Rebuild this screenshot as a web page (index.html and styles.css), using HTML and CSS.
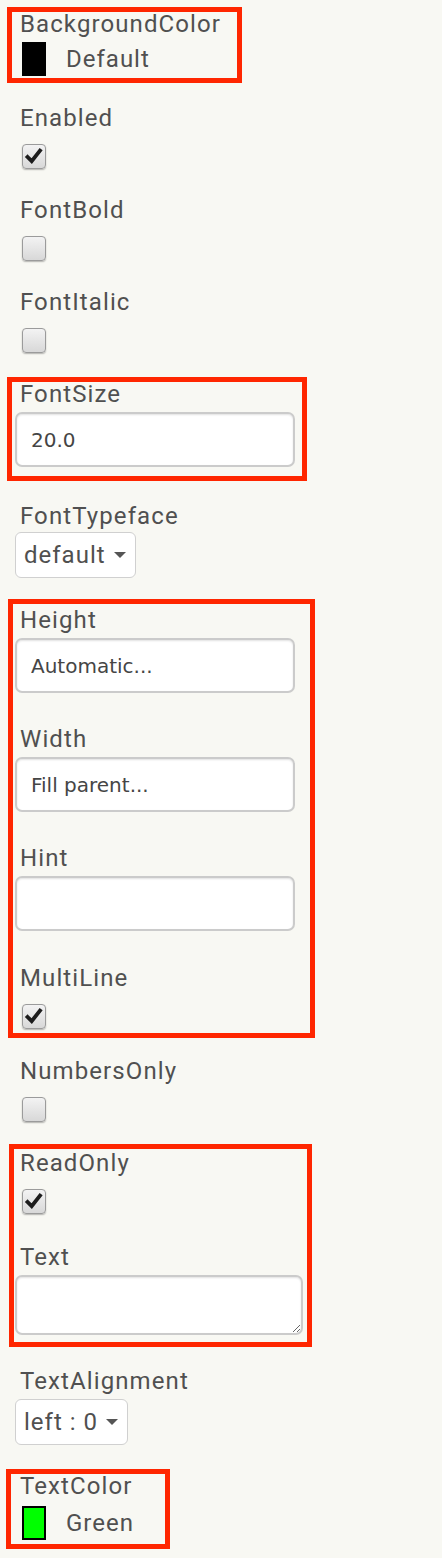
FILE: index.html
```html
<!DOCTYPE html>
<html lang="en">
<head>
<meta charset="utf-8">
<title>Properties</title>
<link rel="stylesheet" href="styles.css">
</head>
<body>
<div class="panel">

  <div class="frame frame-bg">
    <div class="label">BackgroundColor</div>
    <div class="color-row"><span class="swatch swatch-black"></span><span class="color-name">Default</span></div>
  </div>

  <div class="prop gap-23">
    <div class="label">Enabled</div>
    <span class="check"><svg viewBox="0 0 24 24" width="22" height="22"><path d="M5 12 L9.5 16.5 L18.5 5" fill="none" stroke="#1c1c1c" stroke-width="4.2" stroke-linecap="square" stroke-linejoin="miter"/></svg></span>
  </div>

  <div class="prop gap-29">
    <div class="label">FontBold</div>
    <span class="check"></span>
  </div>

  <div class="prop gap-29">
    <div class="label">FontItalic</div>
    <span class="check"></span>
  </div>

  <div class="frame frame-size gap-24">
    <div class="label">FontSize</div>
    <input class="text-input" type="text" value="20.0">
  </div>

  <div class="prop gap-23">
    <div class="label">FontTypeface</div>
    <div class="select select-typeface"><span>default</span><span class="caret"></span></div>
  </div>

  <div class="frame frame-dims gap-21">
    <div class="label">Height</div>
    <input class="text-input" type="text" value="Automatic...">
    <div class="label gap-34">Width</div>
    <input class="text-input" type="text" value="Fill parent...">
    <div class="label gap-34">Hint</div>
    <input class="text-input" type="text" value="">
    <div class="label gap-35">MultiLine</div>
    <span class="check"><svg viewBox="0 0 24 24" width="22" height="22"><path d="M5 12 L9.5 16.5 L18.5 5" fill="none" stroke="#1c1c1c" stroke-width="4.2" stroke-linecap="square" stroke-linejoin="miter"/></svg></span>
  </div>

  <div class="prop gap-21">
    <div class="label">NumbersOnly</div>
    <span class="check"></span>
  </div>

  <div class="frame frame-read gap-22">
    <div class="label">ReadOnly</div>
    <span class="check"><svg viewBox="0 0 24 24" width="22" height="22"><path d="M5 12 L9.5 16.5 L18.5 5" fill="none" stroke="#1c1c1c" stroke-width="4.2" stroke-linecap="square" stroke-linejoin="miter"/></svg></span>
    <div class="label gap-31">Text</div>
    <textarea class="text-area"></textarea>
  </div>

  <div class="prop gap-22">
    <div class="label">TextAlignment</div>
    <div class="select select-align"><span>left : 0</span><span class="caret"></span></div>
  </div>

  <div class="frame frame-color gap-24">
    <div class="label">TextColor</div>
    <div class="color-row color-row-green"><span class="swatch swatch-green"></span><span class="color-name">Green</span></div>
  </div>

</div>
</body>
</html>
```

FILE: styles.css
```css
* {
  box-sizing: border-box;
}

html, body {
  margin: 0;
  background: #f8f8f3;
}

body {
  font-family: Roboto, "Liberation Sans", sans-serif;
  color: #505050;
}

.panel {
  --x: 0px;
  padding-top: 7px;
  padding-bottom: 11px;
}

.frame {
  border: 5px solid #ff2600;
}

.frame-bg {
  --x: 12px;
  margin-left: 7px;
  width: 235px;
  padding-bottom: 2px;
}

.frame-size {
  --x: 12px;
  margin-left: 7px;
  width: 300px;
  padding-bottom: 9px;
}

.frame-dims {
  --x: 13px;
  margin-left: 8px;
  width: 307px;
  padding-top: 4px;
  padding-bottom: 4px;
}

.frame-read {
  --x: 14px;
  margin-left: 9px;
  width: 303px;
  padding-top: 2px;
  padding-bottom: 7px;
}

.frame-color {
  --x: 11px;
  margin-left: 6px;
  width: 164px;
  padding-bottom: 4px;
}

.gap-21 { margin-top: 21px; }
.gap-22 { margin-top: 22px; }
.gap-23 { margin-top: 23px; }
.gap-24 { margin-top: 24px; }
.gap-29 { margin-top: 29px; }
.gap-31 { margin-top: 31px; }
.gap-34 { margin-top: 34px; }
.gap-35 { margin-top: 35px; }

.label {
  font-size: 24px;
  line-height: 24px;
  letter-spacing: 1.1px;
  padding-left: calc(20px - var(--x));
  white-space: nowrap;
}

.color-row {
  display: flex;
  align-items: center;
  height: 34px;
  margin-top: 6px;
  margin-left: calc(22px - var(--x));
}

.color-row-green {
  margin-top: 8px;
}

.swatch {
  display: block;
  width: 24px;
  height: 34px;
  border: 2px solid #000;
}

.swatch-black { background: #000; }
.swatch-green { background: #00ff00; }

.color-name {
  margin-left: 20px;
  font-size: 24px;
  line-height: 34px;
  letter-spacing: 1px;
}

.check {
  display: flex;
  align-items: center;
  justify-content: center;
  width: 24px;
  height: 25px;
  margin-top: 14px;
  margin-left: calc(22px - var(--x));
  border: 1.5px solid #9b9b9b;
  border-radius: 4px;
  background: linear-gradient(#f3f3f3, #d8d8d8);
  box-shadow: 0 1px 1.5px rgba(0, 0, 0, 0.28);
}

.text-input,
.text-area {
  display: block;
  margin-top: 6px;
  margin-left: calc(15px - var(--x));
  border: 2px solid #cbcbcb;
  border-radius: 7px;
  background: #fff;
  box-shadow: inset 0 1px 2px rgba(0, 0, 0, 0.12);
  padding: 0 14px;
  font-family: "DejaVu Sans", sans-serif;
  font-size: 20px;
  color: #454545;
  outline: none;
}

.text-input {
  width: 280px;
  height: 55px;
}

.text-area {
  width: 288px;
  height: 60px;
  resize: both;
}

.select {
  display: inline-flex;
  align-items: center;
  height: 46px;
  margin-left: calc(15px - var(--x));
  padding: 0 9px 0 8px;
  border: 1.5px solid #d0d0d0;
  border-radius: 6px;
  background: #fff;
  font-size: 24px;
  letter-spacing: 1px;
}

.select-typeface {
  margin-top: 4px;
}

.select-align {
  margin-top: 6px;
}

.caret {
  width: 0;
  height: 0;
  margin-left: 8px;
  border-left: 6.5px solid transparent;
  border-right: 6.5px solid transparent;
  border-top: 6.5px solid #555;
}
```
